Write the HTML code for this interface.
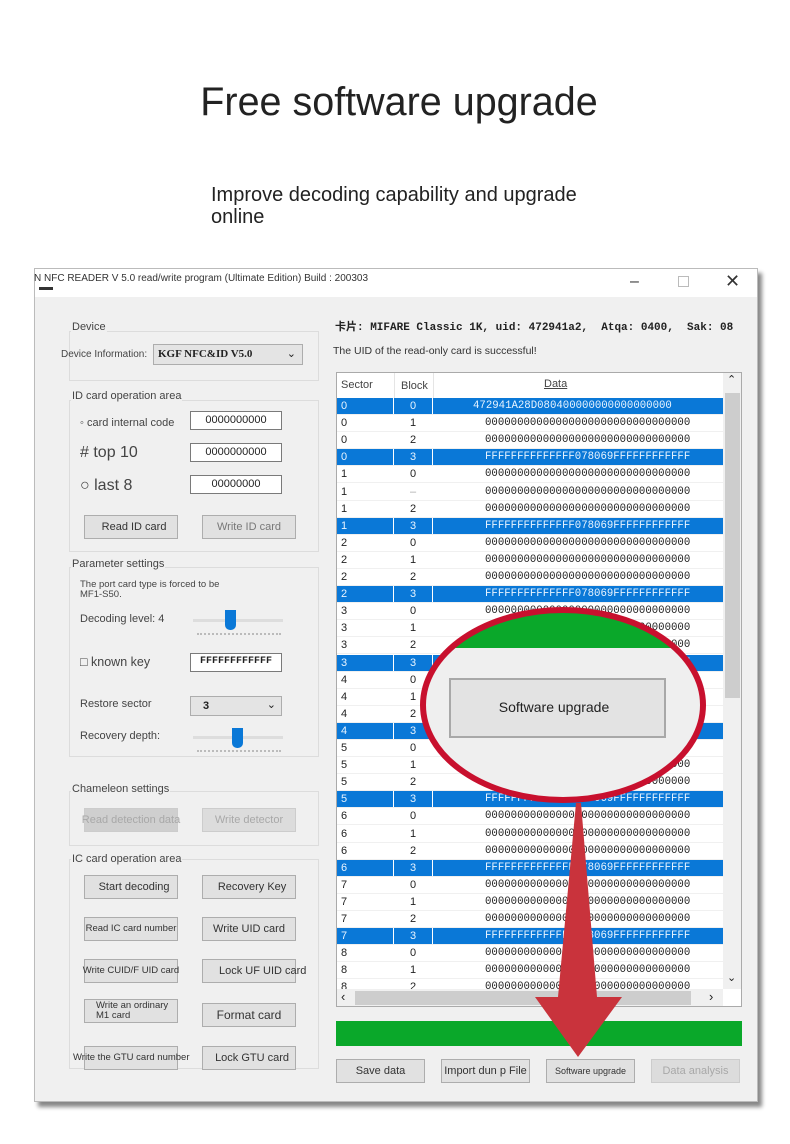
<!DOCTYPE html>
<html><head><meta charset="utf-8">
<style>
*{margin:0;padding:0;box-sizing:border-box}
body{width:790px;height:1144px;background:#fff;position:relative;overflow:hidden;font-family:"Liberation Sans","Noto Sans CJK SC",sans-serif;color:#222}
.a{position:absolute}
.h1{left:0;width:798px;text-align:center;top:80px;font-size:39.5px;color:#222}
.sub{left:211px;top:184px;font-size:20px;line-height:22px;color:#222}
.win{left:34px;top:268px;width:724px;height:834px;background:#f0f0f0;border:1px solid #bbb;box-shadow:4px 5px 4px #888}
.tb{left:0;top:0;width:722px;height:28px;background:#fff}
.grp{border:1px solid #dcdcdc;position:absolute}
.gl{position:absolute;font-size:11px;color:#444;background:#f0f0f0;padding:0 1px}
.btn{position:absolute;background:#e1e1e1;border:1px solid #adadad;font-size:11px;color:#333;text-align:center;display:flex;align-items:center;justify-content:center;line-height:10px}
.dis{color:#a8a8a8;background:#dcdcdc;border-color:#ccc}
.inp{position:absolute;background:#fff;border:1px solid #7a7a7a;font-size:11px;text-align:center;line-height:16px}
.t{position:absolute;font-size:11px;color:#444}
.mono{font-family:"Liberation Mono","DejaVu Sans Mono",monospace}
.tbl{left:336px;top:372px;width:406px;height:635px;background:#fff;border:1px solid #aaa;overflow:hidden}
.row{position:absolute;left:0;width:386px;height:17.1px;font-size:11px;line-height:16px;border-bottom:1px solid #f0f0f0}
.row span{position:absolute;top:0;height:16px}
.c1{left:4px;width:52px}.c2{left:58px;width:36px;text-align:center}.c3{left:97px;width:289px;padding-left:51px;font-family:"Liberation Mono",monospace;font-size:10.7px;white-space:nowrap;overflow:hidden}
.hl span{background:#0a78d7;color:#e8f4ff}
.hl .c1{left:0;width:56px;padding-left:4px}
.hl .c2{left:57px;width:38px}
.hl .c3{left:96px;width:290px;padding-left:52px}
</style></head><body>
<div class="a h1">Free software upgrade</div>
<div class="a sub">Improve decoding capability and upgrade<br>online</div>

<div class="a win">
 <div class="a tb"></div>
 <div class="a" style="left:-1px;top:4px;font-size:10px;color:#333">N NFC READER V 5.0 read/write program (Ultimate Edition) Build : 200303</div>
 <div class="a" style="left:4px;top:18px;width:14px;height:3px;background:#333"></div>
 <div class="a" style="left:595px;top:4px;font-size:16px;color:#333">–</div>
 <div class="a" style="left:643px;top:7px;width:11px;height:11px;border:1px solid #bbb"></div>
 <div class="a" style="left:690px;top:2px;font-size:18px;color:#333">✕</div>

 <!-- Device -->
 <div class="grp" style="left:34px;top:62px;width:250px;height:50px"></div>
 <div class="gl" style="left:36px;top:52px">Device</div>
 <div class="t" style="left:26px;top:80px;font-size:10px">Device Information:</div>
 <div class="a" style="left:118px;top:75px;width:150px;height:21px;background:#e4e4e4;border:1px solid #adadad;font-size:11px;padding:3px 4px;font-family:'Liberation Serif',serif;font-weight:bold">KGF NFC&amp;ID V5.0<span style="position:absolute;right:6px;top:2px;font-weight:normal">⌄</span></div>

 <!-- ID card -->
 <div class="grp" style="left:34px;top:131px;width:250px;height:152px"></div>
 <div class="gl" style="left:36px;top:121px">ID card operation area</div>
 <div class="t" style="left:45px;top:148px">◦ card internal code</div>
 <div class="inp" style="left:155px;top:142px;width:92px;height:19px">0000000000</div>
 <div class="t" style="left:45px;top:175px;font-size:16px">#&nbsp;top 10</div>
 <div class="inp" style="left:155px;top:174px;width:92px;height:19px">0000000000</div>
 <div class="t" style="left:45px;top:208px;font-size:16px">○ last 8</div>
 <div class="inp" style="left:155px;top:206px;width:92px;height:19px">00000000</div>
 <div class="btn" style="left:49px;top:246px;width:94px;height:24px">&nbsp;&nbsp;Read ID card</div>
 <div class="btn" style="left:167px;top:246px;width:94px;height:24px;color:#777">Write ID card</div>

 <!-- Parameter -->
 <div class="grp" style="left:34px;top:298px;width:250px;height:190px"></div>
 <div class="gl" style="left:36px;top:289px">Parameter settings</div>
 <div class="t" style="left:45px;top:311px;font-size:9.5px;line-height:10px">The port card type is forced to be<br>MF1-S50.</div>
 <div class="t" style="left:45px;top:344px">Decoding level: 4</div>
 <div class="a" style="left:158px;top:350px;width:90px;height:3px;background:#ddd"></div>
 <div class="a" style="left:190px;top:341px;width:11px;height:20px;background:#0a78d7;border-radius:0 0 5px 5px"></div>
 <div class="a" style="left:162px;top:364px;width:84px;height:2px;border-top:2px dotted #bbb"></div>
 <div class="t" style="left:45px;top:386px;font-size:12.5px">□ known key</div>
 <div class="inp mono" style="left:155px;top:384px;width:92px;height:19px;font-weight:bold;font-size:10px">FFFFFFFFFFFF</div>
 <div class="t" style="left:45px;top:429px">Restore sector</div>
 <div class="a" style="left:155px;top:427px;width:92px;height:20px;background:#e4e4e4;border:1px solid #adadad;font-size:11px;padding:3px 12px;font-weight:bold">3<span style="position:absolute;right:5px;top:1px;font-weight:normal">⌄</span></div>
 <div class="t" style="left:45px;top:461px">Recovery depth:</div>
 <div class="a" style="left:158px;top:467px;width:90px;height:3px;background:#ddd"></div>
 <div class="a" style="left:197px;top:459px;width:11px;height:20px;background:#0a78d7;border-radius:0 0 5px 5px"></div>
 <div class="a" style="left:162px;top:481px;width:84px;height:2px;border-top:2px dotted #bbb"></div>

 <!-- Chameleon -->
 <div class="grp" style="left:34px;top:522px;width:250px;height:55px"></div>
 <div class="gl" style="left:36px;top:514px">Chameleon settings</div>
 <div class="btn dis" style="left:49px;top:539px;width:94px;height:24px;background:#cfcfcf;white-space:nowrap">Read detection data</div>
 <div class="btn dis" style="left:167px;top:539px;width:94px;height:24px">Write detector</div>

 <!-- IC card -->
 <div class="grp" style="left:34px;top:590px;width:250px;height:210px"></div>
 <div class="gl" style="left:36px;top:584px">IC card operation area</div>
 <div class="btn" style="left:49px;top:606px;width:94px;height:24px">&nbsp;&nbsp;Start decoding</div>
 <div class="btn" style="left:167px;top:606px;width:94px;height:24px">&nbsp;&nbsp;Recovery Key</div>
 <div class="btn" style="left:49px;top:648px;width:94px;height:24px;font-size:9.5px">Read IC card number</div>
 <div class="btn" style="left:167px;top:648px;width:94px;height:24px">Write UID card</div>
 <div class="btn" style="left:49px;top:690px;width:94px;height:24px;font-size:9.5px;white-space:nowrap">Write CUID/F UID card</div>
 <div class="btn" style="left:167px;top:690px;width:94px;height:24px;white-space:nowrap;justify-content:flex-start;padding-left:16px">Lock UF UID card</div>
 <div class="btn" style="left:49px;top:730px;width:94px;height:24px;font-size:9.5px;text-align:left;justify-content:flex-start;padding-left:11px">Write an ordinary<br>M1 card</div>
 <div class="btn" style="left:167px;top:734px;width:94px;height:24px;font-size:12px">Format card</div>
 <div class="btn" style="left:49px;top:777px;width:94px;height:24px;font-size:9.5px;white-space:nowrap;justify-content:flex-start;padding-left:0"><span style="margin-left:-12px">Write the GTU card number</span></div>
 <div class="btn" style="left:167px;top:777px;width:94px;height:24px">&nbsp;&nbsp;Lock GTU card</div>

 <!-- right -->
 <div class="t" style="left:300px;top:49px;font-size:11px;color:#222;font-family:'Liberation Mono','Noto Sans CJK SC',monospace;font-weight:bold;white-space:pre">卡片: MIFARE Classic 1K, uid: 472941a2,  Atqa: 0400,  Sak: 08</div>
 <div class="t" style="left:298px;top:76px;font-size:10.5px;color:#333">The UID of the read-only card is successful!</div>

 <!-- bottom -->
 <div class="a" style="left:301px;top:752px;width:406px;height:25px;background:#0aa82a"></div>
 <div class="btn" style="left:301px;top:790px;width:89px;height:24px">Save data</div>
 <div class="btn" style="left:406px;top:790px;width:89px;height:24px">Import dun p File</div>
 <div class="btn" style="left:511px;top:790px;width:89px;height:24px;font-size:9px">Software upgrade</div>
 <div class="btn dis" style="left:616px;top:790px;width:89px;height:24px">Data analysis</div>
</div>

<div class="a tbl">
 <div class="a" style="left:0;top:0;width:386px;height:25px;font-size:11px;color:#444">
  <span class="a" style="left:4px;top:6px">Sector</span>
  <span class="a" style="left:57px;top:0;height:25px;border-left:1px solid #e5e5e5"></span>
  <span class="a" style="left:64px;top:7px">Block</span>
  <span class="a" style="left:96px;top:0;height:25px;border-left:1px solid #e5e5e5"></span>
  <span class="a" style="left:207px;top:5px;text-decoration:underline">Data</span>
 </div>
 <div class="a" style="left:386px;top:0;width:19px;height:616px;background:#f0f0f0"><div class="a" style="left:2px;top:20px;width:15px;height:305px;background:#cdcdcd"></div><div class="a" style="left:4px;top:0;font-size:11px">⌃</div><div class="a" style="left:4px;top:598px;font-size:11px">⌄</div></div>
 <div class="a" style="left:0;top:616px;width:386px;height:18px;background:#f0f0f0"><div class="a" style="left:18px;top:2px;width:336px;height:14px;background:#cdcdcd"></div><div class="a" style="left:4px;top:0;font-size:13px">‹</div><div class="a" style="left:372px;top:0;font-size:13px">›</div></div>
 <div class="a" style="left:0;top:25px;width:386px;height:591px;overflow:hidden">
<div class="row hl" style="top:0px"><span class="c1">0</span><span class="c2">0</span><span class="c3" style="padding-left:40px">472941A28D080400000000000000000</span></div>
<div class="row" style="top:17.1px"><span class="c1">0</span><span class="c2">1</span><span class="c3">00000000000000000000000000000000</span></div>
<div class="row" style="top:34.2px"><span class="c1">0</span><span class="c2">2</span><span class="c3">00000000000000000000000000000000</span></div>
<div class="row hl" style="top:51.3px"><span class="c1">0</span><span class="c2">3</span><span class="c3">FFFFFFFFFFFFFF078069FFFFFFFFFFFF</span></div>
<div class="row" style="top:68.4px"><span class="c1">1</span><span class="c2">0</span><span class="c3">00000000000000000000000000000000</span></div>
<div class="row" style="top:85.5px"><span class="c1">1</span><span class="c2" style="color:#aaa">–</span><span class="c3">00000000000000000000000000000000</span></div>
<div class="row" style="top:102.6px"><span class="c1">1</span><span class="c2">2</span><span class="c3">00000000000000000000000000000000</span></div>
<div class="row hl" style="top:119.7px"><span class="c1">1</span><span class="c2">3</span><span class="c3">FFFFFFFFFFFFFF078069FFFFFFFFFFFF</span></div>
<div class="row" style="top:136.8px"><span class="c1">2</span><span class="c2">0</span><span class="c3">00000000000000000000000000000000</span></div>
<div class="row" style="top:153.9px"><span class="c1">2</span><span class="c2">1</span><span class="c3">00000000000000000000000000000000</span></div>
<div class="row" style="top:171px"><span class="c1">2</span><span class="c2">2</span><span class="c3">00000000000000000000000000000000</span></div>
<div class="row hl" style="top:188.1px"><span class="c1">2</span><span class="c2">3</span><span class="c3">FFFFFFFFFFFFFF078069FFFFFFFFFFFF</span></div>
<div class="row" style="top:205.2px"><span class="c1">3</span><span class="c2">0</span><span class="c3">00000000000000000000000000000000</span></div>
<div class="row" style="top:222.3px"><span class="c1">3</span><span class="c2">1</span><span class="c3">00000000000000000000000000000000</span></div>
<div class="row" style="top:239.4px"><span class="c1">3</span><span class="c2">2</span><span class="c3">00000000000000000000000000000000</span></div>
<div class="row hl" style="top:256.5px"><span class="c1">3</span><span class="c2">3</span><span class="c3">FFFFFFFFFFFFFF078069FFFFFFFFFFFF</span></div>
<div class="row" style="top:273.6px"><span class="c1">4</span><span class="c2">0</span><span class="c3">00000000000000000000000000000000</span></div>
<div class="row" style="top:290.7px"><span class="c1">4</span><span class="c2">1</span><span class="c3">00000000000000000000000000000000</span></div>
<div class="row" style="top:307.8px"><span class="c1">4</span><span class="c2">2</span><span class="c3">00000000000000000000000000000000</span></div>
<div class="row hl" style="top:324.9px"><span class="c1">4</span><span class="c2">3</span><span class="c3">FFFFFFFFFFFFFF078069FFFFFFFFFFFF</span></div>
<div class="row" style="top:342px"><span class="c1">5</span><span class="c2">0</span><span class="c3">00000000000000000000000000000000</span></div>
<div class="row" style="top:359.1px"><span class="c1">5</span><span class="c2">1</span><span class="c3">00000000000000000000000000000000</span></div>
<div class="row" style="top:376.2px"><span class="c1">5</span><span class="c2">2</span><span class="c3">00000000000000000000000000000000</span></div>
<div class="row hl" style="top:393.3px"><span class="c1">5</span><span class="c2">3</span><span class="c3">FFFFFFFFFFFFFF078069FFFFFFFFFFFF</span></div>
<div class="row" style="top:410.4px"><span class="c1">6</span><span class="c2">0</span><span class="c3">00000000000000000000000000000000</span></div>
<div class="row" style="top:427.5px"><span class="c1">6</span><span class="c2">1</span><span class="c3">00000000000000000000000000000000</span></div>
<div class="row" style="top:444.6px"><span class="c1">6</span><span class="c2">2</span><span class="c3">00000000000000000000000000000000</span></div>
<div class="row hl" style="top:461.7px"><span class="c1">6</span><span class="c2">3</span><span class="c3">FFFFFFFFFFFFFF078069FFFFFFFFFFFF</span></div>
<div class="row" style="top:478.8px"><span class="c1">7</span><span class="c2">0</span><span class="c3">00000000000000000000000000000000</span></div>
<div class="row" style="top:495.9px"><span class="c1">7</span><span class="c2">1</span><span class="c3">00000000000000000000000000000000</span></div>
<div class="row" style="top:513px"><span class="c1">7</span><span class="c2">2</span><span class="c3">00000000000000000000000000000000</span></div>
<div class="row hl" style="top:530.1px"><span class="c1">7</span><span class="c2">3</span><span class="c3">FFFFFFFFFFFFFF078069FFFFFFFFFFFF</span></div>
<div class="row" style="top:547.2px"><span class="c1">8</span><span class="c2">0</span><span class="c3">00000000000000000000000000000000</span></div>
<div class="row" style="top:564.3px"><span class="c1">8</span><span class="c2">1</span><span class="c3">00000000000000000000000000000000</span></div>
<div class="row" style="top:581.4px"><span class="c1">8</span><span class="c2">2</span><span class="c3">00000000000000000000000000000000</span></div>
 </div>
</div>

<svg class="a" style="left:0;top:0" width="790" height="1144">
 <defs><clipPath id="e"><ellipse cx="563" cy="705" rx="140" ry="95"/></clipPath></defs>
 <g clip-path="url(#e)">
  <rect x="400" y="600" width="330" height="210" fill="#efefef"/>
  <rect x="400" y="600" width="330" height="48" fill="#0aa82a"/>
  <rect x="450" y="679" width="215" height="58" fill="#e3e3e3" stroke="#a8a8a8" stroke-width="2"/>
 </g>
 <ellipse cx="563" cy="705" rx="140" ry="95" fill="none" stroke="#c8102e" stroke-width="6"/>
 <text x="554" y="712" text-anchor="middle" font-family="Liberation Sans" font-size="14" fill="#222">Software upgrade</text>
 <polygon points="576,803 581,803 597,997 622,997 578,1057 535,997 558,997" fill="#c9333c"/>
</svg>
</body></html>
